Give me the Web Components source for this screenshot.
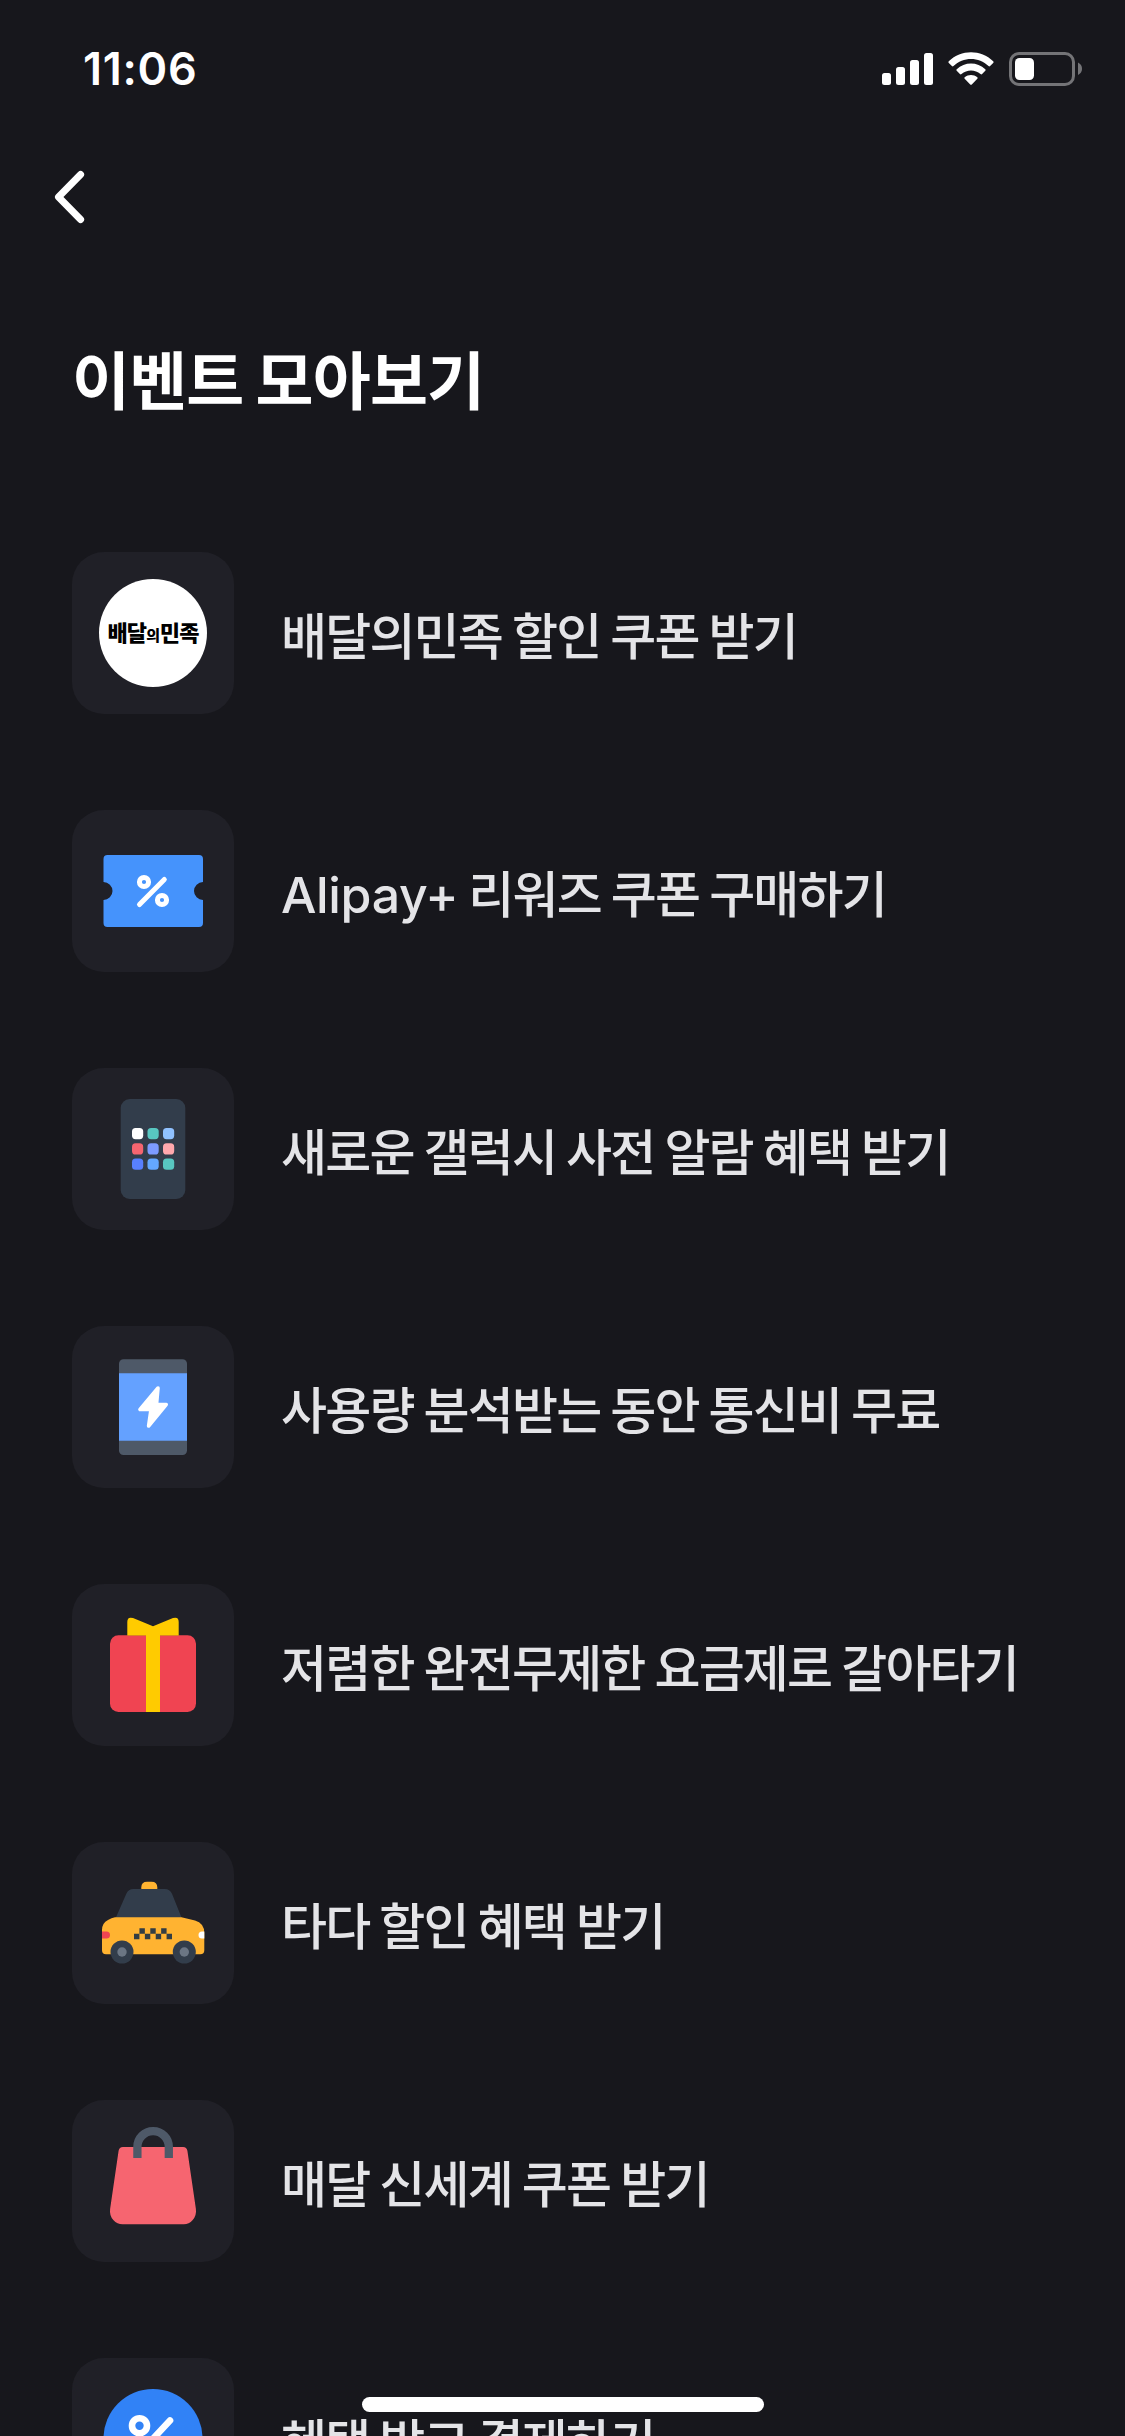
<!DOCTYPE html>
<html lang="ko">
<head>
<meta charset="utf-8">
<title>이벤트 모아보기</title>
<style>
html, body { margin: 0; background: #17171c; }
body { height: 2436px; overflow: hidden; font-family: Inter, "Noto Sans CJK KR", sans-serif; }
</style>
</head>
<body>
<event-screen></event-screen>
<script>
const define = (name, html) => {
  const template = document.createElement('template');
  template.innerHTML = html;
  customElements.define(name, class extends HTMLElement {
    constructor() {
      super();
      this.attachShadow({ mode: 'open' }).append(template.content.cloneNode(true));
    }
  });
};

define('status-bar', `
<style>
:host { display: flex; justify-content: space-between; height: 132px; padding: 0 43px 0 83px; box-sizing: border-box; color: #fff; }
.time { font-size: 45px; font-weight: 600; line-height: 54px; margin-top: 42px; letter-spacing: .7px; }
.icons { display: flex; gap: 15px; margin-top: 52px; height: 34px; }
svg { display: block; }
</style>
<div class="time">11:06</div>
<div class="icons">
  <svg width="51" height="34" viewBox="0 0 51 34" fill="#fff"><rect y="21" width="9" height="12" rx="2.5"/><rect x="14" y="15" width="9" height="18" rx="2.5"/><rect x="28" y="8" width="9" height="25" rx="2.5"/><rect x="42" y="1" width="9" height="32" rx="2.5"/></svg>
  <svg width="46" height="34" viewBox="0 0 46 34" fill="#fff"><path d="M.8 9.3C13-2.8 33-2.8 45.2 9.3q.8.8 0 1.6l-3.1 3.1q-.8.8-1.6 0C31 4.6 15 4.6 5.500 14q-.8.8-1.600 0L.8 10.900q-.8-.8 0-1.600Z"/><path d="M8.700 17.200c8-7.500 20.600-7.500 28.600 0q.8.8 0 1.600l-3.200 3.200q-.8.8-1.600 0c-5.300-4.800-13.700-4.800-19 0q-.8.800-1.600 0l-3.200-3.200q-.8-.8 0-1.600Z"/><path d="M16.700 25.200c3.600-3 9-3 12.600 0q.9.8 0 1.600l-5.500 5.600q-.8.800-1.600 0l-5.500-5.600q-.9-.8 0-1.600Z"/></svg>
  <svg width="73" height="34" viewBox="0 0 73 34"><rect x="1.500" y="1.500" width="63" height="31" rx="8.500" fill="none" stroke="#747477" stroke-width="3"/><rect x="6" y="6" width="19" height="22" rx="4.500" fill="#fff"/><path d="M69 10.500q4 2 4 6.200t-4 6.300Z" fill="#747477"/></svg>
</div>`);

define('nav-bar', `
<style>
:host { display: flex; align-items: center; height: 130px; padding-left: 54px; box-sizing: border-box; }
svg { display: block; }
</style>
<svg width="31" height="54" viewBox="0 0 31 54"><path d="M26.600 4.500 4.500 27l22.100 22.500" fill="none" stroke="#fff" stroke-width="7" stroke-linecap="round" stroke-linejoin="round"/></svg>`);

define('page-title', `
<style>
:host { display: block; padding: 71px 72px 0; height: 290px; box-sizing: border-box; }
h1 { margin: 0; color: #fff; font-size: 63px; font-weight: 700; line-height: 96px; letter-spacing: -.8px; word-spacing: -2px; white-space: nowrap; }
</style>
<h1><slot></slot></h1>`);

define('event-item', `
<style>
:host { display: flex; align-items: center; gap: 47px; height: 162px; }
.tile { flex: none; display: flex; width: 162px; height: 162px; border-radius: 32px; background: #202027; overflow: hidden; }
.label { color: #e4e4e7; font-size: 50px; font-weight: 500; line-height: 70px; letter-spacing: -1.8px; word-spacing: -1.6px; white-space: nowrap; padding-top: 8px; }
::slotted(.latin) { letter-spacing: -.35px; }
</style>
<div class="tile"><slot name="icon"></slot></div>
<div class="label"><slot></slot></div>`);

const icon = (name, body) => define(name, `
<style>
:host { display: block; width: 162px; height: 162px; }
svg { display: block; }
</style>
<svg width="162" height="162" viewBox="0 0 162 162">${body}</svg>`);

define('icon-baemin', `
<style>
:host { display: flex; align-items: center; justify-content: center; width: 162px; height: 162px; }
.disc { display: flex; align-items: center; justify-content: center; width: 108px; height: 108px; border-radius: 50%; background: #fff; }
.name { color: #000; font: 900 22px/30px "Noto Sans CJK KR", sans-serif; letter-spacing: -.8px; white-space: nowrap; }
small { font-size: 15px; letter-spacing: -.4px; }
</style>
<div class="disc"><div class="name">배달<small>의</small>민족</div></div>`);

icon('icon-ticket', `
<path fill="#4593fc" d="M35.500 45h91.500a4 4 0 0 1 4 4v23a9 9 0 0 0 0 18v23a4 4 0 0 1-4 4h-91.500a4 4 0 0 1-4-4v-23a9 9 0 0 0 0-18v-23a4 4 0 0 1 4-4Z"/>
<g fill="none" stroke="#fff" stroke-width="5" stroke-linecap="round"><circle cx="72" cy="72" r="4.600"/><circle cx="90" cy="90" r="4.600"/><path d="M92.300 69.500 67.500 94.500"/></g>`);

icon('icon-phone', `
<rect x="48.700" y="31" width="64.600" height="100" rx="9" fill="#323d4b"/>
${['#ffffff', '#58c7c1', '#90c2ff', '#f66570', '#7d9bff', '#ffa8ad', '#5880ff', '#64a8ff', '#58c7c1'].map((c, i) =>
  `<rect x="${60 + (i % 3) * 15.500}" y="${60 + Math.floor(i / 3) * 15.300}" width="11.200" height="11.200" rx="3.600" fill="${c}"/>`).join('')}`);

icon('icon-data', `
<rect x="47" y="33.300" width="68" height="95.700" rx="4.500" fill="#4e5968"/>
<path fill="#64a1ff" d="M47 47.300h68v67.400H47z"/>
<path d="M86 62 68 83.500h11L76.600 100l17.600-21.500H84.500Z" fill="#fff" stroke="#fff" stroke-width="3.600" stroke-linejoin="round"/>`);

icon('icon-gift', `
<rect x="38" y="51.300" width="86" height="76.700" rx="8.500" fill="#f04452"/>
<path fill="#ffcb00" d="M55.300 52V38q0-5.700 5.700-3.900L81 42.300l20-8.200q5.700-1.800 5.700 3.900v13.500H88V128H74V51.500H55.300Z"/>`);

icon('icon-taxi', `
<path fill="#ffb331" d="M69.300 49v-3.500q0-5.800 5.800-5.800h4.400q5.800 0 5.800 5.800V49Z"/>
<path fill="#323d4b" d="M43.700 76 54.200 52q2.100-5 7.300-5h31.300q5 0 7.300 5l9.600 24Z"/>
<path fill="#ffb331" d="M43 75.300h66.500l13.500 3.200q9.300 2.700 9.300 12.500v17.300q0 4-4 4H34q-4 0-4-4V88q0-7 6-10 3.500-2.300 7-2.700Z"/>
<path fill="#f04452" d="M30 89.500h4.500a3.500 3.500 0 0 1 0 7H30Z"/><path fill="#fff" d="M132.300 89.500H130a3.500 3.500 0 0 0 0 7h2.300Z"/>
<path fill="#333d43" d="${Array.from({ length: 7 }, (_, i) => `M${62 + i * 5.430} ${i % 2 ? 86.200 : 91.700}h5.430v5.500h-5.430z`).join('')}"/>
<g fill="#323d4b"><circle cx="50" cy="110" r="11.500"/><circle cx="112.300" cy="110" r="11.500"/></g>
<g fill="#6b7684"><circle cx="50" cy="110" r="4.700"/><circle cx="112.300" cy="110" r="4.700"/></g>`);

icon('icon-bag', `
<path fill="#f66570" d="M51 47h60q3.800 0 4.400 3.800L123.900 109q.8 6.500-3.200 11t-9.200 4.300h-61q-5.200 0-9.200-4.300t-3.200-11L46.600 50.800Q47.200 47 51 47Z"/>
<path fill="none" stroke="#4e5968" stroke-width="8.300" d="M65.400 58V46.800a15.700 15.700 0 0 1 31.400 0V58"/>`);

icon('icon-percent', `
<circle cx="81" cy="80.500" r="49.500" fill="#3182f6"/>
<g fill="none" stroke="#fff" stroke-width="6.600" stroke-linecap="round"><circle cx="67.500" cy="67.700" r="7.500"/><circle cx="94.500" cy="94" r="7.500"/><path d="M98 62.500 64 99"/></g>`);

define('event-list', `
<style>:host { display: flex; flex-direction: column; gap: 96px; padding: 0 72px; }</style>
<slot></slot>`);

define('home-indicator', `
<style>:host { display: block; position: absolute; left: 362px; top: 2397px; width: 402px; height: 15px; border-radius: 8px; background: #fff; }</style>`);

define('event-screen', `
<style>
:host { display: flex; flex-direction: column; position: relative; width: 1125px; height: 2436px; overflow: hidden; background: #17171c; }
status-bar, nav-bar, page-title, event-list { flex: none; }
</style>
<status-bar></status-bar>
<nav-bar></nav-bar>
<page-title>이벤트 모아보기</page-title>
<event-list>
  <event-item><icon-baemin slot="icon"></icon-baemin>배달의민족 할인 쿠폰 받기</event-item>
  <event-item><icon-ticket slot="icon"></icon-ticket><span class="latin">Alipay+</span> 리워즈 쿠폰 구매하기</event-item>
  <event-item><icon-phone slot="icon"></icon-phone>새로운 갤럭시 사전 알람 혜택 받기</event-item>
  <event-item><icon-data slot="icon"></icon-data>사용량 분석받는 동안 통신비 무료</event-item>
  <event-item><icon-gift slot="icon"></icon-gift>저렴한 완전무제한 요금제로 갈아타기</event-item>
  <event-item><icon-taxi slot="icon"></icon-taxi>타다 할인 혜택 받기</event-item>
  <event-item><icon-bag slot="icon"></icon-bag>매달 신세계 쿠폰 받기</event-item>
  <event-item><icon-percent slot="icon"></icon-percent>혜택 받고 결제하기</event-item>
</event-list>
<home-indicator></home-indicator>`);
</script>
</body>
</html>
